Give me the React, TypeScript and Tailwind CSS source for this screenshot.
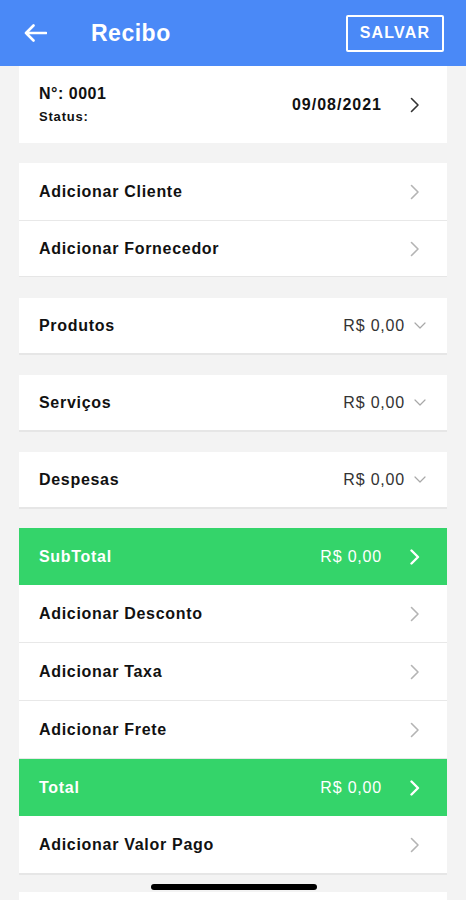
import React from "react";

const font = { fontFamily: '"Liberation Sans", Arial, sans-serif' };

function ChevronRight({ className = "", bold }: { className?: string; bold?: boolean }) {
  return (
    <svg width="10" height="16" viewBox="0 0 10 16" fill="none" className={className}>
      <path
        d="M1.5 1.5L8 8l-6.5 6.5"
        stroke="currentColor"
        strokeWidth={bold ? 2.4 : 1.6}
        strokeLinecap="round"
        strokeLinejoin="round"
      />
    </svg>
  );
}

function ChevronDown() {
  return (
    <svg width="12" height="7" viewBox="0 0 12 7" fill="none" className="text-[#a8a8a8]">
      <path d="M1 1l5 5 5-5" stroke="currentColor" strokeWidth="1.2" strokeLinecap="round" strokeLinejoin="round" />
    </svg>
  );
}

function LinkRow({ label, h = "h-[58px]", divider = true }: { label: string; h?: string; divider?: boolean }) {
  return (
    <div className={`${h} flex items-center justify-between pl-5 pr-[27px] bg-white ${divider ? "border-b border-[#e8e8e8]" : ""}`}>
      <span className="text-[16px] font-bold text-[#111] tracking-[0.7px]">{label}</span>
      <ChevronRight className="text-[#b4b4b4]" />
    </div>
  );
}

function TotalRow({ label }: { label: string }) {
  return (
    <div className="h-[57px] flex items-center justify-between pl-5 pr-[27px] bg-[#34d46a]">
      <span className="text-[16px] font-bold text-white tracking-[0.7px]">{label}</span>
      <div className="flex items-center gap-[28px]">
        <span className="text-[16px] text-white tracking-[0.8px]">R$ 0,00</span>
        <ChevronRight className="text-white" bold />
      </div>
    </div>
  );
}

function AmountCard({ label }: { label: string }) {
  return (
    <div className="h-[57px] flex items-center justify-between pl-5 pr-[21px] bg-white border-b-2 border-[#e6e6e6]">
      <span className="text-[16px] font-bold text-[#111] tracking-[0.7px]">{label}</span>
      <div className="flex items-center gap-[9px]">
        <span className="text-[16px] text-[#333] tracking-[0.8px]">R$ 0,00</span>
        <ChevronDown />
      </div>
    </div>
  );
}

export default function App() {
  return (
    <div className="w-[466px] h-[900px] bg-[#f3f3f3] overflow-hidden relative" style={font}>
      {/* Header */}
      <div className="h-[66px] bg-[#4a89f7] flex items-center pl-[24px] pr-[22px]">
        <svg width="23" height="18" viewBox="0 0 23 18" fill="none">
          <path d="M22 9H2M9.5 1.5L2 9l7.5 7.5" stroke="white" strokeWidth="2.6" strokeLinecap="round" strokeLinejoin="round" />
        </svg>
        <span className="ml-[44px] text-[23px] font-bold text-white tracking-[0.5px]">Recibo</span>
        <div className="ml-auto w-[98px] h-[37px] border-2 border-white rounded-[2px] flex items-center justify-center">
          <span className="text-[16px] font-bold text-white tracking-[1.2px]">SALVAR</span>
        </div>
      </div>

      <div className="px-[19px] flex flex-col">
        {/* Number / date */}
        <div className="h-[77px] bg-white flex items-center justify-between pl-5 pr-[27px]">
          <div className="flex flex-col gap-[6px] -mt-[1px]">
            <span className="text-[16px] font-bold text-[#111] leading-[18px] tracking-[0.5px]">N°: 0001</span>
            <span className="text-[13px] font-bold text-[#111] leading-[15px] tracking-[0.8px]">Status:</span>
          </div>
          <div className="flex items-center gap-[28px]">
            <span className="text-[16px] font-bold text-[#111] tracking-[1px]">09/08/2021</span>
            <ChevronRight className="text-[#333]" />
          </div>
        </div>

        <div className="mt-[20px] border-b border-[#e6e6e6]">
          <LinkRow label="Adicionar Cliente" h="h-[58px]" />
          <LinkRow label="Adicionar Fornecedor" h="h-[55px]" divider={false} />
        </div>

        <div className="mt-[21px] flex flex-col gap-[20px]">
          <AmountCard label="Produtos" />
          <AmountCard label="Serviços" />
          <AmountCard label="Despesas" />
        </div>

        <div className="mt-[19px] border-b-2 border-[#e6e6e6]">
          <TotalRow label="SubTotal" />
          <LinkRow label="Adicionar Desconto" />
          <LinkRow label="Adicionar Taxa" />
          <LinkRow label="Adicionar Frete" />
          <TotalRow label="Total" />
          <LinkRow label="Adicionar Valor Pago" h="h-[57px]" divider={false} />
        </div>

        <div className="mt-[17px] h-[60px] bg-white" />
      </div>

      {/* Home indicator */}
      <div className="absolute left-[151px] top-[884px] w-[166px] h-[6px] rounded-full bg-black" />
    </div>
  );
}
